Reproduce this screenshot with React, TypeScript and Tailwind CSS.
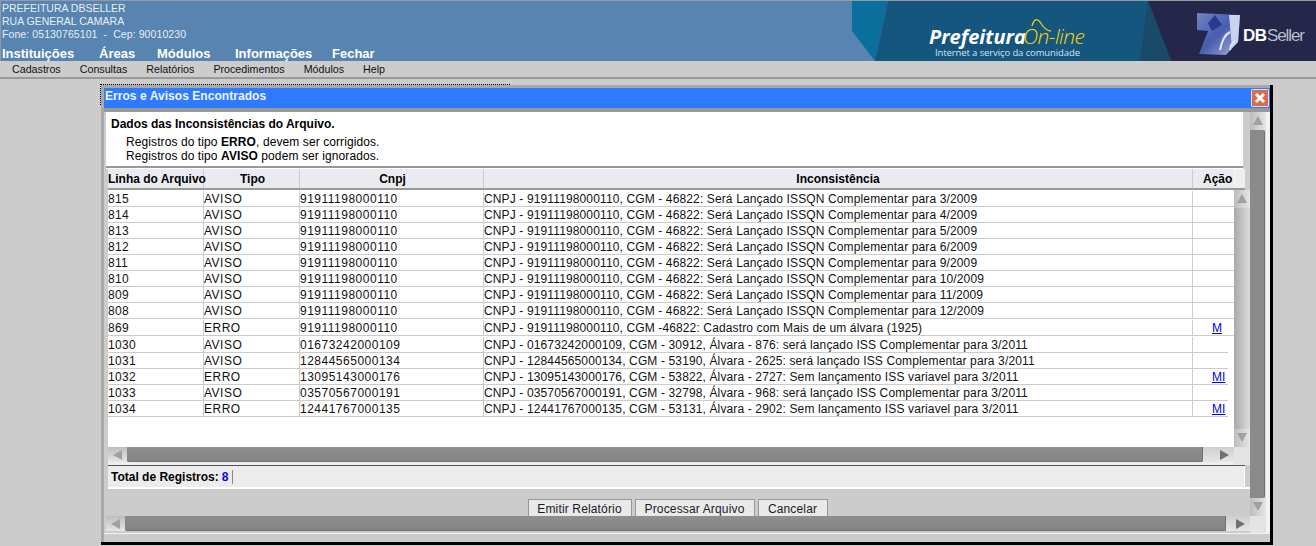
const rows = [
  { linha: "815", tipo: "AVISO", cnpj: "91911198000110", texto: "CNPJ - 91911198000110, CGM - 46822: Será Lançado ISSQN Complementar para 3/2009" },
  { linha: "814", tipo: "AVISO", cnpj: "91911198000110", texto: "CNPJ - 91911198000110, CGM - 46822: Será Lançado ISSQN Complementar para 4/2009" },
  { linha: "813", tipo: "AVISO", cnpj: "91911198000110", texto: "CNPJ - 91911198000110, CGM - 46822: Será Lançado ISSQN Complementar para 5/2009" },
  { linha: "812", tipo: "AVISO", cnpj: "91911198000110", texto: "CNPJ - 91911198000110, CGM - 46822: Será Lançado ISSQN Complementar para 6/2009" },
  { linha: "811", tipo: "AVISO", cnpj: "91911198000110", texto: "CNPJ - 91911198000110, CGM - 46822: Será Lançado ISSQN Complementar para 9/2009" },
  { linha: "810", tipo: "AVISO", cnpj: "91911198000110", texto: "CNPJ - 91911198000110, CGM - 46822: Será Lançado ISSQN Complementar para 10/2009" },
  { linha: "809", tipo: "AVISO", cnpj: "91911198000110", texto: "CNPJ - 91911198000110, CGM - 46822: Será Lançado ISSQN Complementar para 11/2009" },
  { linha: "808", tipo: "AVISO", cnpj: "91911198000110", texto: "CNPJ - 91911198000110, CGM - 46822: Será Lançado ISSQN Complementar para 12/2009" },
  { linha: "869", tipo: "ERRO", cnpj: "91911198000110", texto: "CNPJ - 91911198000110, CGM -46822: Cadastro com Mais de um álvara (1925)", acao: "M", tall: true },
  { linha: "1030", tipo: "AVISO", cnpj: "01673242000109", texto: "CNPJ - 01673242000109, CGM - 30912, Álvara - 876: será lançado ISS Complementar para 3/2011", tall: true, short: true },
  { linha: "1031", tipo: "AVISO", cnpj: "12844565000134", texto: "CNPJ - 12844565000134, CGM - 53190, Álvara - 2625: será lançado ISS Complementar para 3/2011", short: true },
  { linha: "1032", tipo: "ERRO", cnpj: "13095143000176", texto: "CNPJ - 13095143000176, CGM - 53822, Álvara - 2727: Sem lançamento ISS variavel para 3/2011", acao: "MI", short: true },
  { linha: "1033", tipo: "AVISO", cnpj: "03570567000191", texto: "CNPJ - 03570567000191, CGM - 32798, Álvara - 968: será lançado ISS Complementar para 3/2011", short: true },
  { linha: "1034", tipo: "ERRO", cnpj: "12441767000135", texto: "CNPJ - 12441767000135, CGM - 53131, Álvara - 2902: Sem lançamento ISS variavel para 3/2011", acao: "MI", short: true },
]

const menus = ["Cadastros", "Consultas", "Relatórios", "Procedimentos", "Módulos", "Help"]

function Arrow({ dir, color = "#a0a0a0" }: { dir: "up" | "down" | "left" | "right"; color?: string }) {
  const points = {
    up: "5,0 10,9 0,9",
    down: "0,0 10,0 5,9",
    left: "9,0 9,10 0,5",
    right: "0,0 9,5 0,10",
  }[dir]
  return (
    <svg width="10" height="10" viewBox="0 0 10 10">
      <polygon points={points} fill={color} />
    </svg>
  )
}

function VScroll({ thumb }: { thumb?: boolean }) {
  return (
    <div className="flex h-full w-[16px] flex-col bg-gradient-to-r from-[#a8a8a8] to-[#dddddd]">
      <div className="flex h-[18px] shrink-0 items-center justify-center bg-gradient-to-r from-[#bdbdbd] to-[#e6e6e6]">
        <Arrow dir="up" />
      </div>
      {thumb ? (
        <div className="mr-[1px] flex-1 rounded-br-[2px] rounded-tr-[2px] border-r border-[#707070] bg-[#8a8a8a]" />
      ) : (
        <div className="flex-1" />
      )}
      <div className="flex h-[18px] shrink-0 items-center justify-center bg-gradient-to-r from-[#bdbdbd] to-[#e6e6e6]">
        <Arrow dir="down" />
      </div>
    </div>
  )
}

function HScroll({ rightWidth, rightPad }: { rightWidth: string; rightPad: string }) {
  return (
    <div className="flex h-[15px] w-full">
      <div className="flex w-[19px] shrink-0 items-center justify-center bg-gradient-to-b from-[#bdbdbd] to-[#e6e6e6]">
        <Arrow dir="left" />
      </div>
      <div className="flex-1 rounded-b-[2px] border-b border-r border-[#707070] bg-gradient-to-b from-[#8e8e8e] to-[#848484]" />
      <div className={`flex shrink-0 items-center justify-end bg-gradient-to-b from-[#cfcfcf] to-[#e6e6e6] ${rightWidth} ${rightPad}`}>
        <Arrow dir="right" color="#707070" />
      </div>
    </div>
  )
}

function Banner() {
  return (
    <svg width="464" height="60" viewBox="852 1 464 60" className="block">
      <polygon points="852,1 888,1 875,61 852,31" fill="#0b6f9e" />
      <polygon points="888,1 1148,1 1171,61 875,61" fill="#14567e" />
      <polygon points="1148,1 1171,61 1140,61" fill="#1a4a6a" />
      <polygon points="1148,1 1316,1 1316,61 1171,61" fill="#24264a" />
      <text x="929" y="44" fontFamily="'Open Sans', sans-serif" fontSize="20" fontWeight="700" fontStyle="italic" fill="#ffffff">Prefeitura</text>
      <text x="1023" y="44" fontFamily="'Open Sans', sans-serif" fontSize="21" fontWeight="300" fontStyle="italic" fill="#f2d40c" textLength="62">On-line</text>
      <path d="M1032 26 C1034 19 1037 18 1040 22 C1043 27 1046 31 1051 31" fill="none" stroke="#f2d40c" strokeWidth="1.3" />
      <text x="935" y="56" fontFamily="'Open Sans', sans-serif" fontSize="9.5" fill="#d6e2ea" textLength="145">Internet a serviço da comunidade</text>
      <defs>
        <linearGradient id="cube" x1="0" y1="0" x2="1" y2="1">
          <stop offset="0" stopColor="#6f84c8" />
          <stop offset="0.5" stopColor="#4a5cad" />
          <stop offset="1" stopColor="#a9b4df" />
        </linearGradient>
        <filter id="soft">
          <feGaussianBlur stdDeviation="0.7" />
        </filter>
      </defs>
      <g filter="url(#soft)">
        <polygon points="1197,13 1240,15 1238,42 1226,55 1199,54 1208,31 1197,30" fill="url(#cube)" />
        <polygon points="1229,15 1240,15 1238,42 1232,48" fill="#c9d2ee" />
        <polygon points="1208,23 1215,15 1222,25 1212,31" fill="#2a3a8c" />
        <path d="M1220 50 C1222 40 1226 34 1230 32 M1230 50 C1231 44 1233 42 1235 41" fill="none" stroke="#dfe5f7" strokeWidth="2" />
      </g>
      <text x="1243" y="41" fontFamily="'Liberation Sans', sans-serif" fontSize="17" fontWeight="700" fill="#ffffff" textLength="24">DB</text>
      <text x="1267" y="41" fontFamily="'Liberation Sans', sans-serif" fontSize="17" fill="#b9bccb" textLength="38">Seller</text>
    </svg>
  )
}

function Btn({ label, width }: { label: string; width: string }) {
  return (
    <div className={`flex h-[17px] items-center justify-center border border-b-0 border-[#999999] bg-[#e9e9e9] pt-[1px] text-[12px] leading-none tracking-[0.15px] text-[#1a1a2a] ${width}`}>
      {label}
    </div>
  )
}

export default function App() {
  return (
    <div className="relative h-[546px] w-[1316px] overflow-hidden bg-[#cccccc] font-['Liberation_Sans',Arial,sans-serif] text-black">
      {/* cabecalho */}
      <header className="flex h-[61px] border-l border-t border-[#999999] bg-[#5784b0]">
        <div className="flex-1 pl-[1px] text-[#e6eef6]">
          <div className="pt-[1px] text-[10.5px] leading-[13px]">PREFEITURA DBSELLER</div>
          <div className="text-[10.5px] leading-[13px]">RUA GENERAL CAMARA</div>
          <div className="whitespace-pre text-[10.5px] leading-[13px] tracking-[0.09px]">Fone: 05130765101  -  Cep: 90010230</div>
          <nav className="mt-[5px] flex text-[13px] font-bold leading-[15px] text-white">
            <span className="w-[97px]">Instituições</span>
            <span className="w-[58px]">Áreas</span>
            <span className="w-[78px]">Módulos</span>
            <span className="w-[97px]">Informações</span>
            <span>Fechar</span>
          </nav>
        </div>
        <Banner />
      </header>

      <div className="flex h-[18px] items-center gap-[19px] border-b-2 border-[#999999] pl-[12px] text-[10.7px] text-[#111111]">
        {menus.map((m) => (
          <span key={m}>{m}</span>
        ))}
      </div>

      {/* borda pontilhada da janela */}
      <div className="absolute left-[100px] top-[84px] h-[21px] w-[410px] border-l border-t border-dotted border-black" />

      {/* janela */}
      <div className="absolute left-[101px] top-[85px] flex h-[460px] w-[1172px] flex-col border-b-[3px] border-r-[3px] border-black bg-[#a9a9a9] pl-[3px] pt-[3px]">
        <div className="flex h-[20px] shrink-0 justify-between bg-[#2f7bff] pl-[1px] pr-[1px] pt-[1px]">
          <span className="text-[12px] font-bold leading-[14px] tracking-[0.05px] text-[#f0f4ff]">Erros e Avisos Encontrados</span>
          <span className="flex h-[18px] w-[18px] items-center justify-center rounded-[1px] border border-[#cfe0ff] bg-[#dd6b4f]">
            <svg width="12" height="12" viewBox="0 0 12 12">
              <path d="M2 2 L10 10 M10 2 L2 10" stroke="#ffffff" strokeWidth="3" />
            </svg>
          </span>
        </div>
        <div className="h-[4px] shrink-0 bg-[#999999]" />

        <div className="flex h-[421px] shrink-0 bg-[#f2f2f2]">
          <div className="flex w-[1146px] flex-col bg-[#cccccc] pl-[2px]">
            <div className="flex h-[404px] flex-col">
              {/* texto */}
              <div className="h-[54px] w-[1137px] shrink-0 bg-white pl-[5px] pt-[5px] text-[12px] leading-[14px]">
                <p className="font-bold">Dados das Inconsistências do Arquivo.</p>
                <p className="mt-[4px] pl-[15px] tracking-[0.09px]">
                  Registros do tipo <b>ERRO</b>, devem ser corrigidos.
                </p>
                <p className="pl-[15px] tracking-[0.09px]">
                  Registros do tipo <b>AVISO</b> podem ser ignorados.
                </p>
              </div>
              <div className="h-[2px] w-[1137px] shrink-0 bg-[#999999]" />
              <div className="h-[1px] w-[1137px] shrink-0 bg-white" />

              {/* tabela */}
              <div className="w-[1142px] shrink-0 pl-[2px]">
                <div className="flex h-[19px] w-[1137px] bg-[#eaebf0] text-center text-[12px] font-bold leading-[20px]">
                  <div className="w-[96px] whitespace-nowrap border-r border-[#cccccc] text-left tracking-[-0.02px]">Linha do Arquivo</div>
                  <div className="w-[96px] border-r border-[#cccccc] pl-[2px]">Tipo</div>
                  <div className="w-[184px] border-r border-[#cccccc] pl-[2px]">Cnpj</div>
                  <div className="w-[709px] border-r border-[#cccccc]">Inconsistência</div>
                  <div className="w-[41px] pl-[10px] text-left">Ação</div>
                  <div className="h-full w-[11px] border-l border-t border-[#f6f6f6] bg-[#eeeeee]" />
                </div>
                <div className="h-[2px] w-[1137px] bg-[#999999]" />
              </div>

              <div className="flex h-[257px] shrink-0">
                <div className="flex w-[1128px] flex-col">
                  <div className="ml-[2px] flex-1 bg-white pt-[1px]">
                    {rows.map((r) => (
                      <div
                        key={r.linha}
                        className={`relative flex border-b border-[#cccccc] text-[12px] leading-[17px] text-[#111111] ${r.tall ? "h-[17px] pt-[1px]" : "h-[16px]"}`}
                      >
                        <div className="w-[96px] border-r border-[#cccccc] tracking-[0.33px]">{r.linha}</div>
                        <div className="w-[96px] border-r border-[#cccccc] tracking-[0.5px]">{r.tipo}</div>
                        <div className="w-[184px] border-r border-[#cccccc] tracking-[0.5px]">{r.cnpj}</div>
                        <div className="w-[709px] whitespace-nowrap border-r border-[#cccccc] tracking-[0.13px]">{r.texto}</div>
                        <div className="w-[41px] pl-[19px]">
                          {r.acao && <a className="text-[#0000ee] underline">{r.acao}</a>}
                        </div>
                        {r.short && <div className="absolute bottom-[-1px] right-0 h-[1px] w-[6px] bg-white" />}
                      </div>
                    ))}
                  </div>
                </div>
                <VScroll />
              </div>

              <div className="flex h-[15px] shrink-0">
                <div className="ml-[2px] w-[1126px]">
                  <HScroll rightWidth="w-[31px]" rightPad="pr-[4px]" />
                </div>
                <div className="h-[18px] w-[16px] bg-[#e4e4e4]" />
              </div>
              <div className="ml-[2px] h-[3px] w-[1126px] shrink-0 bg-[#eeeeee]" />
              <div className="ml-[2px] h-[1px] w-[1137px] shrink-0 bg-[#555555]" />

              {/* total */}
              <div className="ml-[2px] flex h-[21px] w-[1137px] shrink-0 items-center border-r border-white bg-[#ececec] pl-[3px] text-[12px] font-bold">
                <span>Total de Registros:</span>
                <span className="ml-[3px] text-[#0000ff]">8</span>
                <span className="ml-[4px] h-[14px] w-[1px] bg-[#888888]" />
              </div>
              <div className="ml-[2px] h-[2px] w-[1142px] shrink-0 bg-white" />

              {/* botoes */}
              <div className="flex flex-1 items-end justify-center gap-[3px] pr-[1px]">
                <Btn label="Emitir Relatório" width="w-[104px]" />
                <Btn label="Processar Arquivo" width="w-[120px]" />
                <Btn label="Cancelar" width="w-[70px]" />
              </div>
            </div>
            <div>
              <HScroll rightWidth="w-[24px]" rightPad="pr-[4px]" />
            </div>
          </div>
          <div className="flex w-[16px] flex-col">
            <div className="h-[404px]">
              <VScroll thumb />
            </div>
            <div className="h-[17px] bg-[#e4e4e4]" />
          </div>
        </div>
        <div className="h-[1px] shrink-0 bg-[#f2f2f2]" />
        <div className="flex-1 bg-[#cccccc]" />
      </div>
    </div>
  )
}
